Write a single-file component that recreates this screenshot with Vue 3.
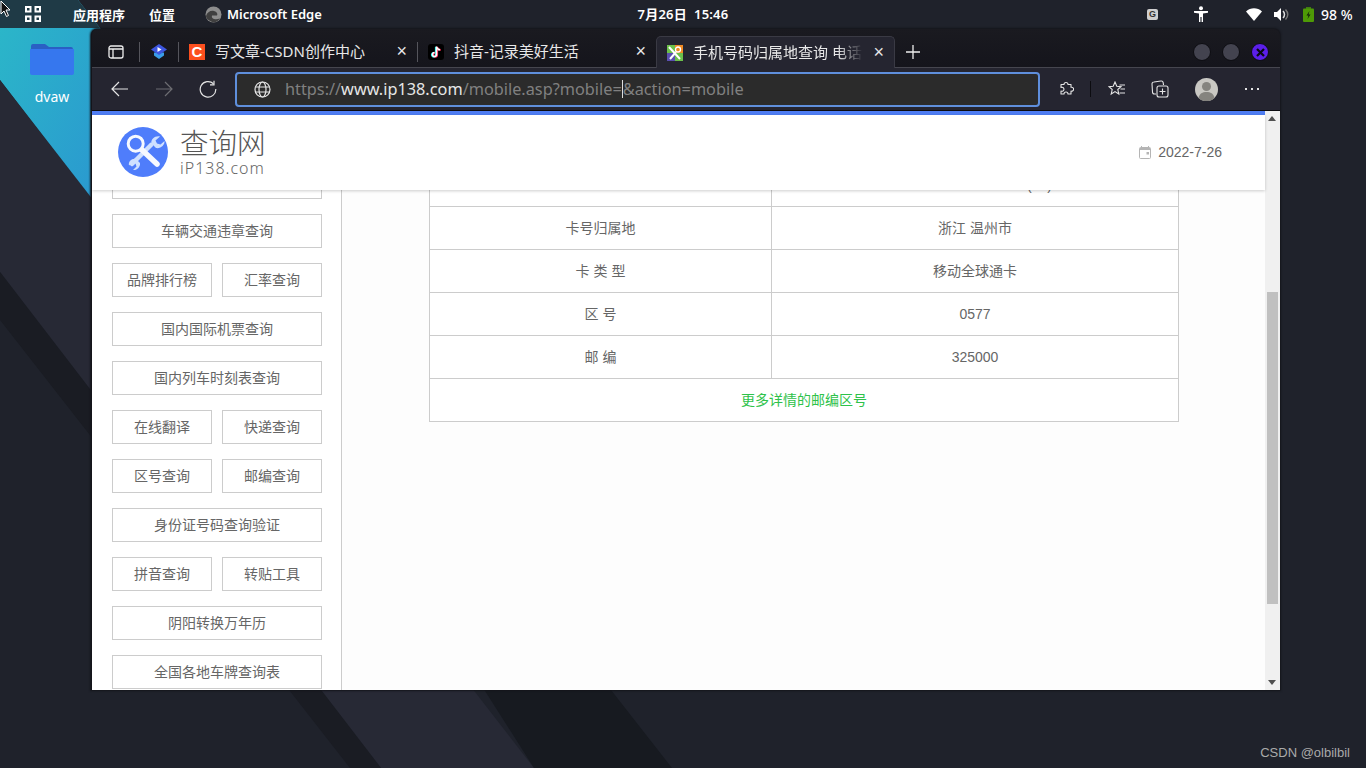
<template>
  <div class="desktop">
    <!-- wallpaper -->
    <svg class="wallpaper" width="1366" height="768" viewBox="0 0 1366 768">
      <defs>
        <linearGradient id="teal" x1="0" y1="0" x2="1" y2="1">
          <stop offset="0" stop-color="#2bb8c8" />
          <stop offset="1" stop-color="#2a8fd2" />
        </linearGradient>
      </defs>
      <rect width="1366" height="768" fill="#1f222b" />
      <polygon points="0,0 78,0 100,28 130,60 130,250 0,80" fill="url(#teal)" />
      <polygon points="0,0 78,0 100,28 0,28" fill="#1f3a46" />
      <polygon points="0,80 534,768 381,768 0,272" fill="#272935" />
      <polygon points="0,272 381,768 350,768 0,320" fill="#1a1c23" />
      <polygon points="534,768 672,768 400,420 300,400" fill="#171a20" />
    </svg>

    <!-- top panel -->
    <header class="panel">
      <svg class="cursor" width="12" height="18" viewBox="0 0 12 18">
        <path d="M1 1v13l3-3 2.500 5.500 2-1L6 10h4z" fill="#111" stroke="#fff" stroke-width="1" />
      </svg>
      <div class="panel-left">
        <svg class="apps" width="16" height="16" viewBox="0 0 16 16" fill="none" stroke="#fff" stroke-width="2">
          <rect x="1" y="1" width="4.500" height="4.500" />
          <rect x="10.500" y="1" width="4.500" height="4.500" />
          <rect x="1" y="10.500" width="4.500" height="4.500" />
          <rect x="10.500" y="10.500" width="4.500" height="4.500" />
        </svg>
        <span class="panel-menu first">应用程序</span>
        <span class="panel-menu second">位置</span>
        <svg class="edge" width="17" height="17" viewBox="0 0 17 17">
          <circle cx="8.500" cy="8.500" r="8" fill="#8d8d8d" />
          <path d="M1 10c1-4 5-6 8-5 3 .6 4 3 3 4.500H7c-1 3 3 5 8 3-2 3.500-6 4.500-9 3-3-1.500-5-3-5-5.500z" fill="#3f3f3f" />
        </svg>
        <span class="panel-menu">Microsoft Edge</span>
      </div>
      <div class="clock">7月26日&nbsp; 15:46</div>
      <div class="tray">
        <span class="g-icon">G</span>
        <svg class="tray-man" width="14" height="16" viewBox="0 0 14 16" fill="#fff">
          <circle cx="7" cy="2.200" r="2" />
          <path d="M0 5h14v1.800L9 7.500V16H7.600v-5H6.400v5H5V7.500L0 6.800z" />
        </svg>
        <svg class="tray-wifi" width="16" height="13" viewBox="0 0 16 13">
          <path d="M0 3.500C4.500-.8 11.500-.8 16 3.500L8 13z" fill="#fff" />
        </svg>
        <svg class="tray-sound" width="15" height="13" viewBox="0 0 15 13">
          <path d="M0 4h3l4-4v13L3 9H0z" fill="#fff" />
          <path d="M9 3c2 2 2 5 0 7" fill="none" stroke="#ddd" stroke-width="1.500" />
          <path d="M11.500 1.500c3 3 3 7 0 10" fill="none" stroke="#777" stroke-width="1.500" />
        </svg>
        <svg class="tray-battery" width="11" height="15" viewBox="0 0 11 15">
          <rect x="3" y="0" width="5" height="2" fill="#3f7d10" />
          <rect x="0" y="1.500" width="11" height="13.500" rx="1" fill="#4e9a06" />
          <path d="M6.500 4 3.500 8.500h2L4.500 12l3-4.500h-2z" fill="#13220a" />
        </svg>
        <span class="percent">98 %</span>
      </div>
    </header>

    <!-- desktop icon -->
    <div class="folder">
      <svg width="44" height="32" viewBox="0 0 44 32">
        <path d="M1 3a2 2 0 0 1 2-2h12l4 3h22a2 2 0 0 1 2 2v4H1z" fill="#2a5fc4" />
        <path d="M0 6h44v24a2 2 0 0 1-2 2H2a2 2 0 0 1-2-2z" fill="#3677ee" />
      </svg>
      <span>dvaw</span>
    </div>

    <!-- browser window -->
    <section class="window">
      <div class="tabstrip">
        <div class="strip-btn">
          <svg width="16" height="14" viewBox="0 0 16 14" fill="none" stroke="#eee" stroke-width="1.300">
            <rect x="1" y="1" width="14" height="12" rx="2" />
            <path d="M1 4h14M5 4v9" />
          </svg>
        </div>
        <i class="divider"></i>
        <div class="strip-btn narrow">
          <svg width="16" height="15" viewBox="0 0 16 15">
            <path d="M3 8.500v3L8 15l5-3.500v-3z" fill="#3a9ee8" />
            <path d="M8 0l8 5.500-8 5.500-8-5.500z" fill="#3d56e0" />
            <path d="M6.500 3v5l4-2.500z" fill="#fff" />
          </svg>
        </div>
        <i class="divider"></i>
        <div class="tab">
          <span class="csdn">C</span>
          <span class="tab-title">写文章-CSDN创作中心</span>
          <span class="tab-close">×</span>
        </div>
        <i class="divider"></i>
        <div class="tab">
          <svg width="16" height="16" viewBox="0 0 16 16">
            <rect width="16" height="16" rx="3" fill="#000" />
            <path d="M8.500 2.500v8a2 2 0 1 1-2-2M8.500 2.500c.3 2 1.500 3 3.500 3.200" fill="none" stroke="#25f4ee" stroke-width="1.800" transform="translate(-.7 .3)" />
            <path d="M8.500 2.500v8a2 2 0 1 1-2-2M8.500 2.500c.3 2 1.500 3 3.500 3.200" fill="none" stroke="#fe2c55" stroke-width="1.800" transform="translate(.7 .3)" />
            <path d="M8.500 2.500v8a2 2 0 1 1-2-2M8.500 2.500c.3 2 1.500 3 3.500 3.200" fill="none" stroke="#fff" stroke-width="1.500" />
          </svg>
          <span class="tab-title">抖音-记录美好生活</span>
          <span class="tab-close">×</span>
        </div>
        <div class="tab active">
          <svg width="16" height="16" viewBox="0 0 16 16">
            <rect width="8" height="8" fill="#6cc04a" />
            <rect x="8" width="8" height="8" fill="#f08a24" />
            <rect y="8" width="8" height="8" fill="#5a4fb0" />
            <rect x="8" y="8" width="8" height="8" fill="#6cc04a" />
            <circle cx="11" cy="4.500" r="2.500" fill="none" stroke="#fff" stroke-width="1.300" />
            <path d="M2 2l11 12M9 7l-6 7" stroke="#fff" stroke-width="2" />
          </svg>
          <span class="tab-title fade">手机号码归属地查询 电话号码查询</span>
          <span class="tab-close">×</span>
        </div>
        <svg class="plus" width="14" height="14" viewBox="0 0 14 14" stroke="#eee" stroke-width="1.300">
          <path d="M7 0v14M0 7h14" />
        </svg>
        <div class="win-btns">
          <i class="win-btn"></i>
          <i class="win-btn"></i>
          <i class="win-btn close">
            <svg width="9" height="9" viewBox="0 0 9 9" stroke="#0b0b14" stroke-width="2.200">
              <path d="M1 1l7 7M8 1L1 8" />
            </svg>
          </i>
        </div>
      </div>

      <div class="toolbar">
        <svg class="tool back" width="18" height="16" viewBox="0 0 18 16" fill="none" stroke="#e4e4e4" stroke-width="1.200">
          <path d="M17 8H1M8 1 1 8l7 7" />
        </svg>
        <svg class="tool forward" width="18" height="16" viewBox="0 0 18 16" fill="none" stroke="#6d6d72" stroke-width="1.200">
          <path d="M1 8h16M10 1l7 7-7 7" />
        </svg>
        <svg class="tool refresh" width="18" height="18" viewBox="0 0 18 18" fill="none" stroke="#e4e4e4" stroke-width="1.200">
          <path d="M14.500 3.800A7.800 7.800 0 1 0 16.800 9" />
          <path d="M15 .8v4h-4" />
        </svg>
        <div class="urlbar">
          <svg width="17" height="17" viewBox="0 0 17 17" fill="none" stroke="#e4e4e4" stroke-width="1.200">
            <circle cx="8.500" cy="8.500" r="7.500" />
            <ellipse cx="8.500" cy="8.500" rx="3.500" ry="7.500" />
            <path d="M1.500 6h14M1.500 11h14" />
          </svg>
          <div class="url">https://<b>www.ip138.com</b>/mobile.asp?mobile=<i class="caret"></i>&amp;action=mobile</div>
        </div>
        <div class="tool-right">
          <svg width="16" height="16" viewBox="0 0 16 16" fill="none" stroke="#e4e4e4" stroke-width="1.100" stroke-linejoin="round">
            <path d="M3 3.500h3a2 2 0 1 1 4 0h3v2.800a2 2 0 1 1 0 3.800V13h-3a2 2 0 1 0-4 0H3v-3a2 2 0 1 0 0-3.500z" />
          </svg>
          <i class="tool-sep"></i>
          <svg class="fav" width="18" height="16" viewBox="0 0 18 16" fill="none" stroke="#e4e4e4" stroke-width="1.100">
            <path d="M7 1l1.800 4.200 4.200.4-3.200 2.900 1 4.500L7 10.600l-3.800 2.400 1-4.500L1 5.600l4.200-.4z" />
            <path d="M11.500 4H17M12.500 8H17M11.500 12H17" />
          </svg>
          <svg class="coll" width="18" height="18" viewBox="0 0 18 18" fill="none" stroke="#e4e4e4" stroke-width="1.100">
            <path d="M5 14H3.500A2 2 0 0 1 1.500 12L1 4a2 2 0 0 1 2-2l7-1a2 2 0 0 1 2.200 1.700L12.500 5" />
            <rect x="6" y="6" width="11" height="11" rx="2" />
            <path d="M11.500 8.500v6M8.500 11.500h6" />
          </svg>
          <svg class="avatar" width="23" height="23" viewBox="0 0 23 23">
            <circle cx="11.500" cy="11.500" r="11.500" fill="#c9c8c3" />
            <circle cx="11.500" cy="8.500" r="4.500" fill="#85847f" />
            <path d="M3.500 20c1-4.500 4-6 8-6s7 1.500 8 6a11.500 11.500 0 0 1-16 0z" fill="#85847f" />
          </svg>
          <svg class="dots" width="14" height="4" viewBox="0 0 14 4" fill="#e4e4e4">
            <rect x="0" y="1" width="2" height="2" />
            <rect x="6" y="1" width="2" height="2" />
            <rect x="12" y="1" width="2" height="2" />
          </svg>
        </div>
      </div>

      <div class="page">
        <div class="viewport">
          <div class="site-head">
            <div class="logo">
              <svg width="50" height="50" viewBox="0 0 50 50">
                <circle cx="25" cy="25" r="25" fill="#4f7dfb" />
                <path d="M14 37 33 18" stroke="#cfe0ff" stroke-width="4.500" stroke-linecap="round" />
                <path d="M42 9.500l-4.500 4 1.500 3 3.500 1 4-3.500c.5 4-4 8-8.500 7l-4.500-4.500c-1-4 3.500-8 8.500-7z" fill="#cfe0ff" />
                <path d="M11 38.500l3.500-3 3 1 1 3-3.500 3.500c4 .5 7.500-3 7-7l-4-4c-4-1-8 2.500-7 6.500z" fill="#cfe0ff" />
                <path d="M23 22 39 37" stroke="#f6f9ff" stroke-width="5.500" stroke-linecap="round" />
                <circle cx="17.700" cy="16.700" r="7.500" fill="#4f7dfb" stroke="#f6f9ff" stroke-width="3" />
              </svg>
              <div class="logo-text">
                <strong>查询网</strong>
                <span>iP138.com</span>
              </div>
            </div>
            <div class="today">
              <svg width="12" height="13" viewBox="0 0 12 13">
                <path d="M2 0h1v2H2zM9 0h1v2H9z" fill="#b5b5b5" />
                <rect x=".5" y="1.500" width="11" height="11" rx="1" fill="none" stroke="#b5b5b5" />
                <rect x="1" y="2" width="10" height="2" fill="#b5b5b5" />
                <rect x="7.500" y="6" width="2.500" height="2.500" fill="#b5b5b5" />
              </svg>
              <span>2022-7-26</span>
            </div>
          </div>

          <div class="content">
            <aside class="sidebar">
              <a
                v-for="link in links"
                :key="link.name"
                class="side-link"
                :class="{ full: !link.half }"
              >{{ link.name }}</a>
            </aside>
            <main class="result">
              <table class="info">
                <colgroup>
                  <col class="col-a" />
                  <col />
                </colgroup>
                <tbody>
                  <tr>
                    <td></td>
                    <td class="clipped">13000000000 (00)</td>
                  </tr>
                  <tr v-for="row in rows" :key="row[0]">
                    <td>{{ row[0] }}</td>
                    <td :class="{ num: /^\d+$/.test(row[1]) }">{{ row[1] }}</td>
                  </tr>
                  <tr>
                    <td colspan="2" class="more">更多详情的邮编区号</td>
                  </tr>
                </tbody>
              </table>
            </main>
          </div>
        </div>
        <div class="scrollbar">
          <i class="arrow up"></i>
          <i class="thumb"></i>
          <i class="arrow down"></i>
        </div>
      </div>
    </section>

    <div class="mark">CSDN @olbilbil</div>
  </div>
</template>

<script setup>
const links = [
  { name: '手机号码查询' },
  { name: '车辆交通违章查询' },
  { name: '品牌排行榜', half: true },
  { name: '汇率查询', half: true },
  { name: '国内国际机票查询' },
  { name: '国内列车时刻表查询' },
  { name: '在线翻译', half: true },
  { name: '快递查询', half: true },
  { name: '区号查询', half: true },
  { name: '邮编查询', half: true },
  { name: '身份证号码查询验证' },
  { name: '拼音查询', half: true },
  { name: '转贴工具', half: true },
  { name: '阴阳转换万年历' },
  { name: '全国各地车牌查询表' }
]

const rows = [
  ['卡号归属地', '浙江 温州市'],
  ['卡 类 型', '移动全球通卡'],
  ['区 号', '0577'],
  ['邮 编', '325000']
]
</script>

<style>
html,
body {
  margin: 0;
  background: #1f222b;
}
</style>

<style scoped>
.desktop {
  position: relative;
  width: 1366px;
  height: 768px;
  overflow: hidden;
  font-family: "Noto Sans", "Noto Sans CJK SC", sans-serif;
}
.wallpaper {
  position: absolute;
  left: 0;
  top: 0;
}

/* top panel */
.panel {
  position: absolute;
  left: 0;
  top: 0;
  width: 1366px;
  height: 28px;
  color: #fff;
  font-size: 13px;
  font-weight: 600;
}
.panel-left {
  position: absolute;
  left: 25px;
  top: 0;
  height: 28px;
  display: flex;
  align-items: center;
}
.panel-menu {
  white-space: nowrap;
}
.panel-menu.first {
  margin-left: 32px;
}
.panel-menu.second {
  margin-left: 24px;
}
.edge {
  margin-left: 30px;
  margin-right: 5px;
}
.cursor {
  position: absolute;
  left: 0;
  top: 0;
  z-index: 2;
}
.clock {
  position: absolute;
  left: 0;
  right: 0;
  top: 0;
  line-height: 28px;
  text-align: center;
  letter-spacing: 0.2px;
}
.tray {
  position: absolute;
  left: 1147px;
  top: 0;
  height: 28px;
  display: flex;
  align-items: center;
}
.g-icon {
  width: 11px;
  height: 11px;
  background: #cfcfcf;
  border-radius: 2px;
  color: #333;
  font: 700 9px/11px "Liberation Sans", sans-serif;
  text-align: center;
}
.tray-man {
  margin-left: 36px;
}
.tray-wifi {
  margin-left: 38px;
}
.tray-sound {
  margin-left: 12px;
}
.tray-battery {
  margin-left: 14px;
}
.percent {
  margin-left: 7px;
  font-size: 14px;
  font-weight: 500;
}

.folder {
  position: absolute;
  left: 30px;
  top: 43px;
  width: 44px;
  color: #fff;
  font-size: 14px;
  text-align: center;
}
.folder svg {
  display: block;
}
.folder span {
  display: block;
  margin-top: 12px;
  line-height: 20px;
}

/* browser window */
.window {
  position: absolute;
  left: 91px;
  top: 29px;
  width: 1189px;
  height: 661px;
  display: flex;
  flex-direction: column;
  box-sizing: border-box;
  border-left: 1px solid #14141a;
  border-radius: 6px 6px 0 0;
  background: #14141a;
  box-shadow: 0 0 2px 1px #14151b;
  overflow: hidden;
}
.tabstrip {
  height: 38px;
  flex: none;
  display: flex;
  align-items: flex-end;
  background: linear-gradient(#1a1a20, #15151c);
  color: #e8e8e8;
  font-size: 15px;
  border-bottom: 1px solid #46464f;
  box-sizing: content-box;
}
.strip-btn {
  width: 47px;
  height: 31px;
  display: flex;
  align-items: center;
  justify-content: center;
}
.strip-btn.narrow {
  width: 38px;
}
.divider {
  width: 1px;
  height: 20px;
  background: #55555c;
  margin-bottom: 5px;
}
.tab {
  width: 238px;
  height: 31px;
  display: flex;
  align-items: center;
  padding-left: 10px;
  box-sizing: border-box;
  position: relative;
}
.tab.active {
  width: 239px;
  background: #252530;
  border: 1px solid #3a3a44;
  border-bottom: 0;
  border-radius: 5px 5px 0 0;
  margin-bottom: -1px;
  height: 32px;
}
.csdn {
  width: 16px;
  height: 16px;
  background: #fc4f1e;
  color: #fff;
  font: 700 15px/16px "Liberation Sans", sans-serif;
  text-align: center;
}
.tab-title {
  margin-left: 10px;
  white-space: nowrap;
  overflow: hidden;
  line-height: 20px;
  padding-bottom: 2px;
}
.tab-title.fade {
  width: 170px;
  -webkit-mask-image: linear-gradient(90deg, #000 85%, transparent);
  mask-image: linear-gradient(90deg, #000 85%, transparent);
}
.tab-close {
  position: absolute;
  right: 10px;
  top: 5px;
  font: 400 18px/20px "Liberation Sans", sans-serif;
}
.plus {
  margin: 0 0 8px 11px;
}
.win-btns {
  margin-left: auto;
  margin-right: 11px;
  margin-bottom: 6px;
  display: flex;
  gap: 11px;
}
.win-btn {
  width: 18px;
  height: 18px;
  border-radius: 50%;
  background: #43434f;
  border: 1px solid #0d0d12;
  box-sizing: border-box;
  display: flex;
  align-items: center;
  justify-content: center;
}
.win-btn.close {
  background: #5b1fea;
}

.toolbar {
  height: 42px;
  flex: none;
  display: flex;
  align-items: center;
  background: #252530;
  border-bottom: 1px solid #0c0c10;
}
.tool.back {
  margin-left: 19px;
}
.tool.forward {
  margin-left: 26px;
}
.tool.refresh {
  margin-left: 26px;
}
.urlbar {
  margin-left: 18px;
  width: 805px;
  height: 35px;
  flex: none;
  box-sizing: border-box;
  border: 2px solid #5f8fdc;
  border-radius: 4px;
  background: #2b2b2b;
  display: flex;
  align-items: center;
  padding-left: 17px;
}
.url {
  margin-left: 14px;
  color: #808080;
  font-size: 16.3px;
  white-space: nowrap;
}
.url b {
  font-weight: 400;
  color: #e6e6e6;
}
.caret {
  display: inline-block;
  width: 1px;
  height: 18px;
  background: #ddd;
  vertical-align: -3px;
}
.tool-right {
  display: flex;
  align-items: center;
  margin-left: 18px;
}
.tool-right svg {
  flex: none;
}
.tool-sep {
  width: 1px;
  height: 16px;
  background: #0c0c10;
  margin-left: 16px;
}
.fav {
  margin-left: 17px;
}
.coll {
  margin-left: 25px;
}
.avatar {
  margin-left: 26px;
}
.dots {
  margin-left: 27px;
}

.page {
  flex: 1;
  display: flex;
  min-height: 0;
  background: #fdfdfd;
}
.viewport {
  flex: 1;
  min-width: 0;
  display: flex;
  flex-direction: column;
  border-top: 4px solid #4f7df3;
  font-family: "Liberation Sans", "Noto Sans CJK SC", sans-serif;
  font-size: 14px;
  color: #666;
}
.site-head {
  height: 75px;
  flex: none;
  box-sizing: border-box;
  background: #fff;
  box-shadow: 0 1px 3px rgba(0, 0, 0, 0.2);
  position: relative;
  z-index: 1;
  display: flex;
  align-items: center;
  justify-content: space-between;
  padding: 0 43px 1px 26px;
}
.logo {
  display: flex;
  align-items: center;
  gap: 12px;
}
.logo svg {
  display: block;
}
.logo-text {
  display: flex;
  flex-direction: column;
  color: #555;
}
.logo-text strong {
  font: 300 28.500px/28px "Noto Sans CJK SC", sans-serif;
}
.logo-text span {
  margin-top: 4px;
  font: 300 16px/17px "Noto Sans", sans-serif;
  letter-spacing: 1px;
  color: #666;
}
.today {
  display: flex;
  align-items: center;
  gap: 7px;
}
.content {
  flex: 1;
  min-height: 0;
  display: flex;
  overflow: hidden;
}
.sidebar {
  width: 250px;
  flex: none;
  box-sizing: border-box;
  border-right: 1px solid #ccc;
  background: #fff;
  padding-left: 20px;
  display: grid;
  grid-template-columns: 100px 100px;
  grid-auto-rows: 34px;
  align-content: start;
  gap: 15px 10px;
  margin-top: -25px;
}
.side-link {
  box-sizing: border-box;
  border: 1px solid #ccc;
  line-height: 32px;
  text-align: center;
}
.side-link.full {
  grid-column: span 2;
}
.result {
  flex: 1;
  padding-left: 87px;
}
.info {
  width: 750px;
  margin-top: -27px;
  border-collapse: collapse;
  table-layout: fixed;
  background: #fff;
}
.col-a {
  width: 342px;
}
.info td {
  height: 43px;
  padding: 0 0 2px;
  box-sizing: border-box;
  border: 1px solid #ccc;
  text-align: center;
}
.info td.num {
  padding-bottom: 0;
}
.info td.clipped {
  padding: 0 126px 1px 0;
  text-align: right;
}
.info td.more {
  color: #2ec24a;
}

.scrollbar {
  width: 15px;
  flex: none;
  background: #f0f0f0;
  position: relative;
}
.arrow {
  position: absolute;
  left: 3px;
  width: 0;
  height: 0;
  border-left: 4px solid transparent;
  border-right: 4px solid transparent;
}
.arrow.up {
  top: 5px;
  border-bottom: 5px solid #505050;
}
.arrow.down {
  bottom: 5px;
  border-top: 5px solid #505050;
}
.thumb {
  position: absolute;
  left: 2px;
  top: 181px;
  width: 11px;
  height: 312px;
  background: #c0c0c0;
}

.mark {
  position: absolute;
  right: 16px;
  bottom: 7px;
  color: #aaa;
  font: 13px/16px "Liberation Sans", sans-serif;
}
</style>
